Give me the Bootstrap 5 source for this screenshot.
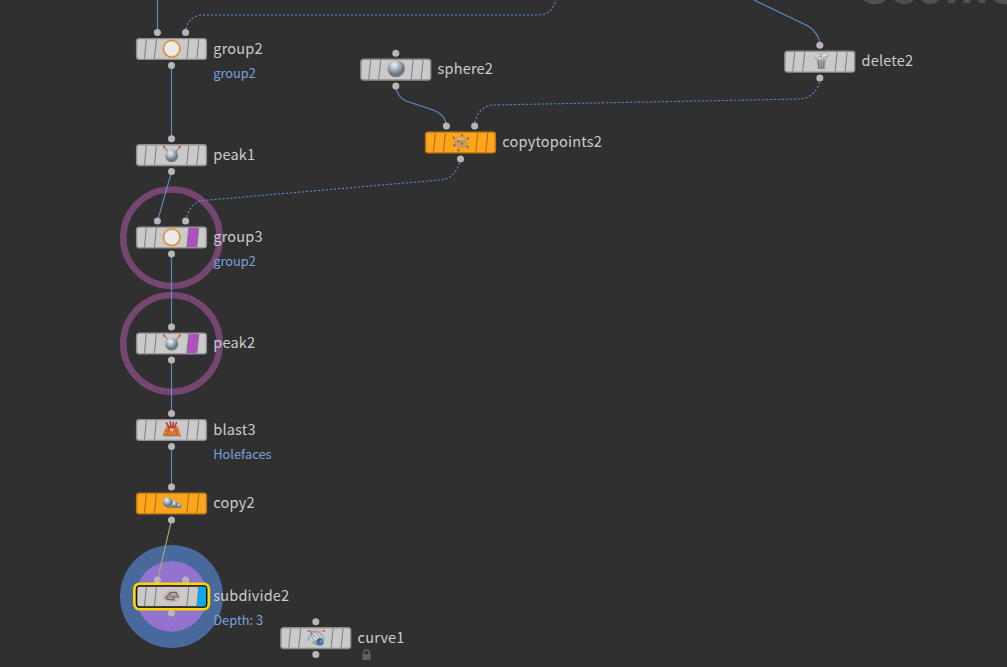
<!DOCTYPE html>
<html lang="en">
<head>
  <meta charset="UTF-8">
  <meta name="viewport" content="width=device-width, initial-scale=1.0">
  <title>Network Editor</title>
  <link href="https://cdn.jsdelivr.net/npm/bootstrap@5.3.3/dist/css/bootstrap.min.css" rel="stylesheet">
  <style>
    body {
      background-color: #303030;
      font-family: "Noto Sans CJK SC", "Noto Sans", sans-serif;
    }
    .network {
      height: 667px;
    }
    .context-title {
      left: 856px;
      top: -47px;
      font-size: 46px;
      line-height: 60px;
      font-weight: 700;
      color: #505050;
    }
    .node {
      width: 71px;
      height: 22px;
    }
    .node svg {
      overflow: visible;
    }
    .node-text {
      left: 77.3px;
      top: -1px;
    }
    .node-name {
      font-size: 14.5px;
      line-height: 22px;
      letter-spacing: .19px;
      color: #cccccc;
    }
    .node-info {
      font-size: 12.8px;
      line-height: 20px;
      margin-top: 4px;
      color: #76a3de;
    }
    .lock {
      margin: 1px 0 0 1px;
    }
    .wires path {
      fill: none;
      stroke: #5c8fd0;
      stroke-width: 1.1;
    }
    .wires .dotted {
      stroke-dasharray: 2 2;
    }
    .wires .green {
      stroke: #9bb573;
    }
  </style>
</head>
<body>
  <main id="network" class="network position-relative overflow-hidden">
    <div class="context-title position-absolute text-nowrap">Geometry</div>

    <!-- Rings and wires -->
    <svg class="wires position-absolute top-0 start-0" width="1007" height="667">
      <circle cx="171.5" cy="237.7" r="48.2" fill="none" stroke="#75466f" stroke-width="6.6"/>
      <circle cx="171.5" cy="343.5" r="48.2" fill="none" stroke="#75466f" stroke-width="6.6"/>
      <circle cx="171.5" cy="596.4" r="51.5" fill="#47699b"/>
      <circle cx="171.5" cy="596.4" r="35.4" fill="#9373cd"/>
      <path d="M157.5 0V29"/>
      <path class="dotted" d="M186 29C188 20 194 15 204 15H538C549 15 553 9 556 0"/>
      <path d="M171.5 66V138"/>
      <path d="M171.5 172L157.5 221"/>
      <path class="dotted" d="M186 221C188 209 194 202 203 200.5L440 180C452 179 459 170 460 159"/>
      <path d="M171.5 254V327"/>
      <path d="M171.5 360V413"/>
      <path d="M171.5 447V487"/>
      <path class="green" d="M171.5 520L157.5 580"/>
      <path d="M396 87C396 93 401 99 406 101L430 109C440 112 446 118 446 126"/>
      <path d="M754 0L808 26C815 30 820 38 820 45"/>
      <path class="dotted" d="M820 78C819 90 811 98 801 99L492 105C482 106 475 115 474.5 126"/>
    </svg>
  </main>

  <!-- Icon artwork, centred on 0,0 -->
  <svg class="position-absolute" width="0" height="0">
    <defs>
      <radialGradient id="ball" cx=".4" cy=".28" r=".72">
        <stop offset="0" stop-color="#eef4f7"/>
        <stop offset=".4" stop-color="#a9b5be"/>
        <stop offset=".8" stop-color="#62717e"/>
        <stop offset="1" stop-color="#87827c"/>
      </radialGradient>
      <g id="icon-group">
        <circle r="8.2" fill="#ebebeb" stroke="#f0cf9f" stroke-width="2.4"/>
        <circle r="8.4" fill="none" stroke="#dc9440" stroke-width="1.3"/>
        <circle r="8.4" fill="none" stroke="#c9802f" stroke-width="1.3" stroke-dasharray="1 1.6"/>
      </g>
      <g id="icon-peak">
        <path d="M-7.5 -7.5L-3.5 -3M8 -7.5L4 -3" stroke="#b77f7f" stroke-width="1.3" fill="none"/>
        <path d="M-8.5 -8.8h2v2h-2zM7 -8.8h2v2h-2z" fill="#c84f4f"/>
        <circle cy="1" r="6.4" fill="url(#ball)"/>
      </g>
      <g id="icon-sphere">
        <circle cx=".2" cy="-.8" r="8.7" fill="url(#ball)"/>
      </g>
      <g id="icon-blast">
        <path d="M-8 5.5H9.5V7H-7z" fill="#8d8d8d" opacity=".6"/>
        <path d="M-5.5 -3.5H6L9 5.5H-9z" fill="#dc7b3a"/>
        <path d="M-9 5.5H9M-7 1H7M-3 -3L-4 5M4 -3L5 5" stroke="#b5592a" stroke-width=".8"/>
        <path d="M-5.5 -7.5L-2 -1.5M-1.6 -8.5L-.6 -2M1.8 -8L.8 -2M5 -7.5L2 -1.5" stroke="#b02733" stroke-width="1.4"/>
        <circle cy="0" r="1.8" fill="#e8b79e"/>
      </g>
      <g id="icon-copy">
        <path d="M-5 4.2H9.5" stroke="#8c6a35" stroke-width="1.6" opacity=".6"/>
        <circle cx="7.2" cy="2.4" r="2.4" fill="url(#ball)"/>
        <circle cx="2.5" cy="1" r="3.6" fill="url(#ball)"/>
        <circle cx="-4" cy="-1" r="5" fill="url(#ball)"/>
      </g>
      <g id="icon-points">
        <path d="M-6.5 -4.5L1.5 -7L7.5 -4L7 5L-2 7.5L-6.5 3z" fill="#dba250"/>
        <circle cx="0" cy="0" r="6.2" fill="#d09a4e"/>
        <path d="M-4 -3.5C-1 -6 3 -5 4 -3C1 -3 -2 -2 -4 1z" fill="#e6b468"/>
        <g fill="#966f50">
          <circle cx="-7" cy="-4.5" r="1.3"/><circle cx="1.2" cy="-7.2" r="1.3"/><circle cx="7.2" cy="-3.8" r="1.3"/>
          <circle cx="6.8" cy="4.6" r="1.3"/><circle cx="-2.2" cy="7.8" r="1.3"/><circle cx="-6.3" cy="3" r="1.3"/>
          <circle cx="-2.4" cy="-1" r="1.3"/>
        </g>
        <circle cx="1.2" cy="1" r="1.4" fill="#77798a"/>
      </g>
      <g id="icon-trash">
        <path d="M-3.5 -2H6L5 6.5H-2.5z" fill="#a8a8a4"/>
        <path d="M-1.8 -1L-1.2 6M1.2 -1V6M4 -1L3.5 6" stroke="#73736f" stroke-width="1"/>
        <path d="M-5 -5L-2 -8L1 -7L4 -9L8 -7L7 -3L3 -2.5L-4 -2z" fill="#dededb" stroke="#999" stroke-width=".7"/>
        <path d="M-4 -3.2L0 -5.5L3 -3.5L7 -5.5M1 -7L2 -5" stroke="#85857f" stroke-width=".8" fill="none"/>
        <ellipse cx="1.2" cy="6.5" rx="4" ry="1.2" fill="#8b8b87"/>
      </g>
      <g id="icon-subdivide">
        <path d="M-8.5 2L-6.5 -3L-2 -6L5 -5L8.5 0L6 4.5L-3 5.5z" fill="#cfb9b9" stroke="#cfa6a6" stroke-width=".8"/>
        <path d="M-6 1.5L-2 -3.5L4.5 -4L6.5 .5L1.5 1L2.5 3.8L-5 3z" fill="#aaa0a1" stroke="#706164" stroke-width="1.1"/>
        <path d="M-2 -3.5L-.5 0L-6 1.5M-.5 0L6.5 .5" stroke="#8a7b7d" stroke-width=".8" fill="none"/>
      </g>
      <g id="icon-curve">
        <path d="M-8 3C-7 -3 -4 -6 0 -6.5C4 -6 7 -3 8 2" stroke="#85a9cc" stroke-width="1.2" fill="none"/>
        <path d="M-8 -6.8H9" stroke="#d99090" stroke-width="1"/>
        <path d="M-8.5 -7.8h2v2h-2zM7 -7.8h2v2h-2z" fill="#d86464"/>
        <path d="M-5 5L0 7H4L-1 2z" fill="#8a8a8a" opacity=".6"/>
        <path d="M-5.5 -6.5L-1 -5.5L5 1L1.5 5L-3.5 0z" fill="#e2e2dc" stroke="#7c8386" stroke-width=".9"/>
        <path d="M-5 -6L1 1" stroke="#666c70" stroke-width=".9"/>
        <circle cx="4" cy="4" r="3.7" fill="#4f72a2"/>
        <path d="M1.5 3L4.5 .7" stroke="#34547f" stroke-width="1.3"/>
        <circle cx="5" cy="3.6" r="1" fill="#8ba5c6"/>
      </g>
    </defs>
  </svg>

  <script src="https://cdn.jsdelivr.net/npm/bootstrap@5.3.3/dist/js/bootstrap.bundle.min.js"></script>

  <script>
    const nodes = [
      { name: "group2", info: "group2", icon: "group", x: 136, y: 38, inputs: 2 },
      { name: "peak1", icon: "peak", x: 136, y: 144.1, inputs: 1 },
      { name: "group3", info: "group2", icon: "group", x: 136, y: 226.5, inputs: 2, flag: "template" },
      { name: "peak2", icon: "peak", x: 136, y: 332.5, inputs: 1, flag: "template" },
      { name: "blast3", info: "Holefaces", icon: "blast", x: 136, y: 419, inputs: 1 },
      { name: "copy2", icon: "copy", x: 136, y: 492.5, inputs: 1, color: "orange" },
      { name: "subdivide2", info: "Depth: 3", icon: "subdivide", x: 136, y: 585.5, inputs: 2, flag: "display", selected: true },
      { name: "sphere2", icon: "sphere", x: 360.3, y: 58.6, inputs: 1 },
      { name: "copytopoints2", icon: "points", x: 425, y: 131.5, inputs: 2, color: "orange" },
      { name: "delete2", icon: "trash", x: 784.3, y: 50.7, inputs: 1 },
      { name: "curve1", icon: "curve", x: 280.3, y: 627.1, inputs: 1, locked: true }
    ];

    const lockIcon = `
      <svg class="lock d-block" width="14" height="12" viewBox="0 0 14 12">
        <path d="M4.8 5V3.5a2.7 2.7 0 0 1 5.4 0V5" fill="none" stroke="#686b6d" stroke-width="1.3"/>
        <rect x="3.2" y="5" width="8.6" height="6" rx=".8" fill="#5f6366"/>
        <path d="M4 9L7.5 5.5M7.5 10.5L11 7" stroke="#464b4f" stroke-width="1"/>
      </svg>`;

    function drawBody(node) {
      const orange = node.color === "orange";
      const fill = orange ? "#ffa51c" : "#cacaca";
      const edge = node.selected ? "#161616" : orange ? "#b87512" : "#8e8e8e";
      const line = orange ? "#a56a12" : "#7c7c7c";
      const inputs = node.inputs === 2 ? [21.4, 49.6] : [35.5];
      const dx = node.x % 1;
      const dy = node.y % 1;
      let svg = `<svg class="d-block" width="71" height="22"><g transform="translate(${dx} ${dy})">`;

      inputs.forEach(cx => {
        svg += `<circle cx="${cx}" cy="-5.4" r="3.5" fill="#b6b6b6"/>`;
      });
      svg += `<circle cx="35.5" cy="27.4" r="3.5" fill="#b6b6b6"/>`;
      if (node.selected) {
        svg += `<rect x="-1.6" y="-1.6" width="74.4" height="25.2" rx="5" fill="#161616" stroke="#ffd500" stroke-width="2.8"/>`;
      }
      svg += `<rect x=".6" y=".6" width="69.8" height="20.8" rx="2.6" fill="${fill}" stroke="${edge}" stroke-width="1.4"/>`;
      if (node.flag === "template") {
        svg += `<path d="M52.9 1.3H62.7L60.7 20.7H50.9z" fill="#b04fc0"/>`;
      }
      if (node.flag === "display") {
        svg += `<path d="M62.8 1.3H68.5Q69.7 1.3 69.7 2.5V19.5Q69.7 20.7 68.5 20.7H60.8z" fill="#00adf5"/>`;
      }
      svg += `<path d="M10.4 1.3L8.4 20.7M20.4 1.3L18.4 20.7M52.8 1.3L50.8 20.7M62.8 1.3L60.8 20.7" stroke="${line}" stroke-width="1"/>`;
      svg += `<use href="#icon-${node.icon}" x="35.7" y="10.8"/></g></svg>`;
      return svg;
    }

    const network = document.getElementById("network");

    nodes.forEach(node => {
      const el = document.createElement("div");
      el.className = "node position-absolute";
      el.style.left = node.x + "px";
      el.style.top = Math.floor(node.y) + "px";
      el.innerHTML = drawBody(node) + `
        <div class="node-text position-absolute text-nowrap">
          <div class="node-name">${node.name}</div>
          ${node.info ? `<div class="node-info">${node.info}</div>` : ""}
          ${node.locked ? lockIcon : ""}
        </div>`;
      network.appendChild(el);
    });
  </script>
</body>
</html>
